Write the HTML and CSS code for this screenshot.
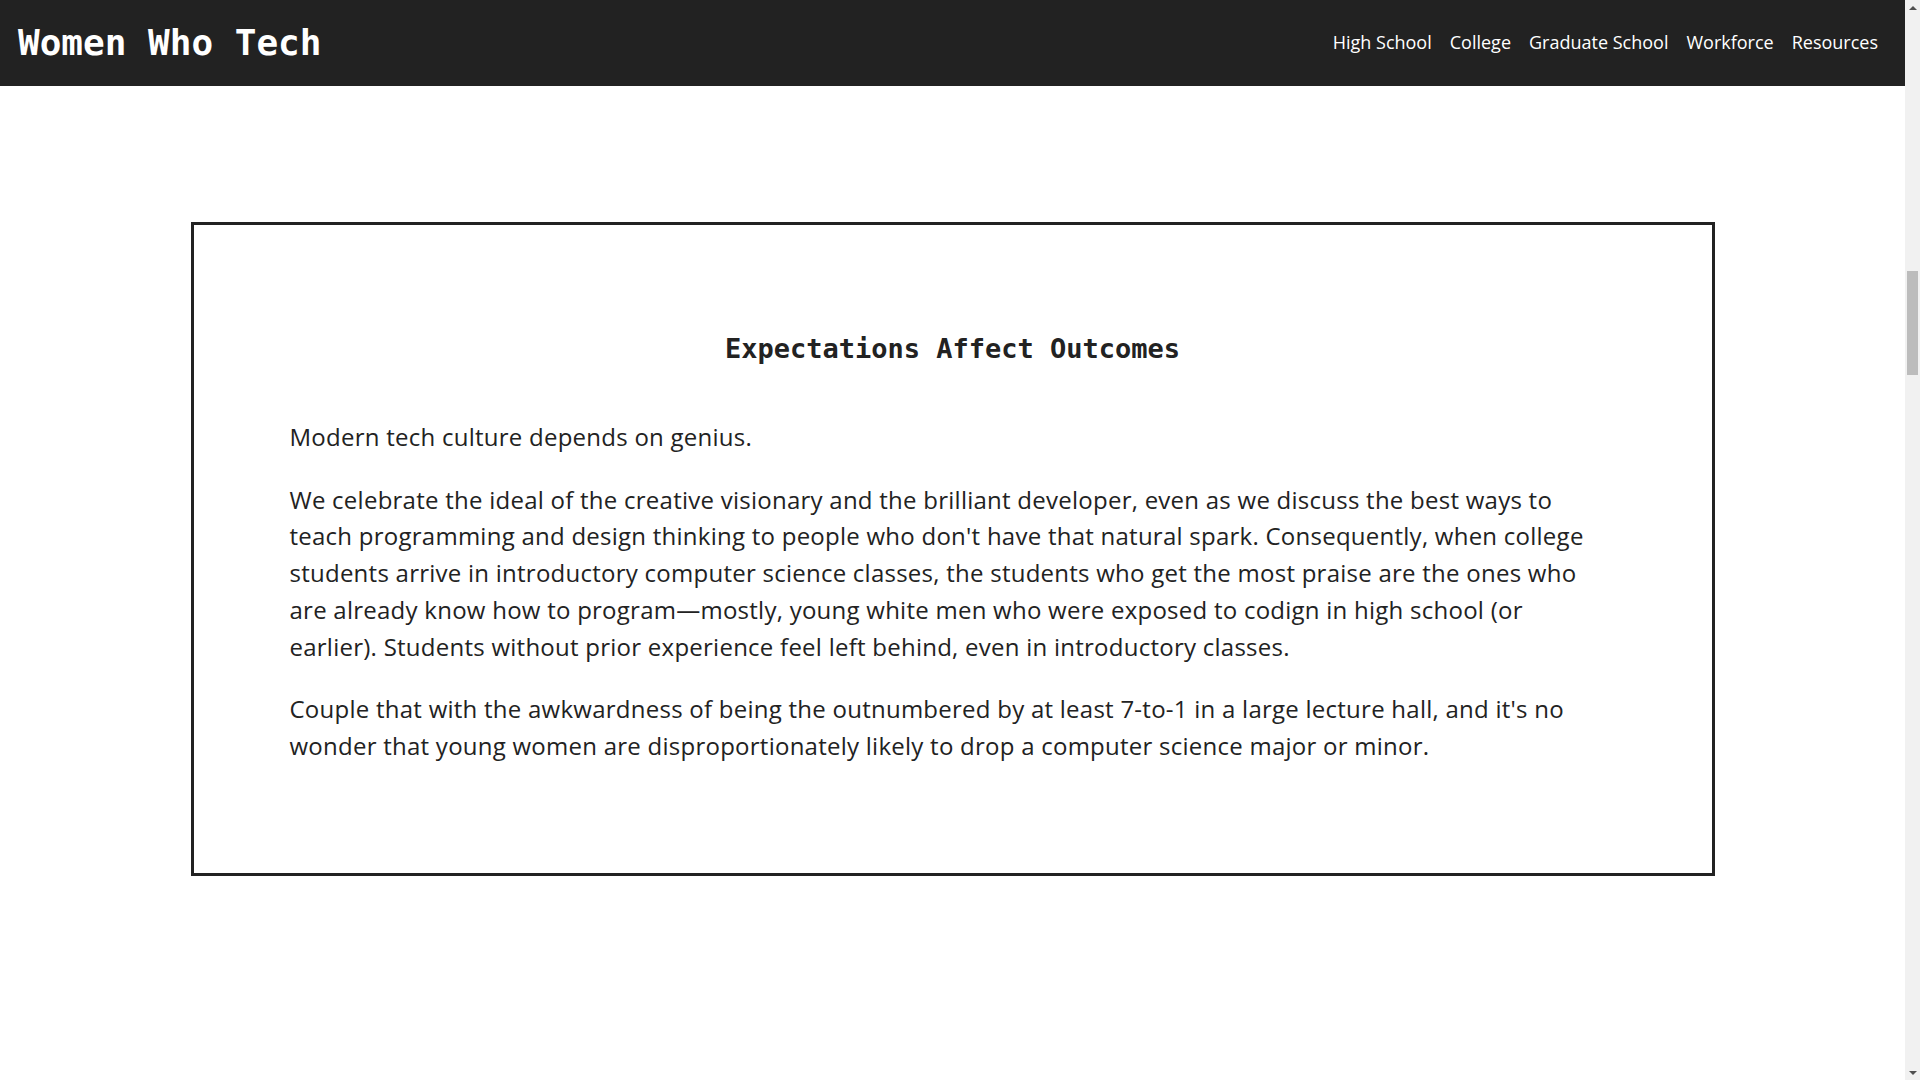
FILE: index.html
```html
<!DOCTYPE html>
<html lang="en">
<head>
<meta charset="utf-8">
<title>Women Who Tech</title>
<link rel="stylesheet" href="styles.css">
</head>
<body>
<div class="page">
  <header class="site-header">
    <h1 class="brand">Women Who Tech</h1>
    <nav class="nav">
      <a href="#" class="nav-link">High School</a>
      <a href="#" class="nav-link">College</a>
      <a href="#" class="nav-link">Graduate School</a>
      <a href="#" class="nav-link">Workforce</a>
      <a href="#" class="nav-link">Resources</a>
    </nav>
  </header>
  <main class="main">
    <article class="panel">
      <h2 class="panel-title">Expectations Affect Outcomes</h2>
      <p class="panel-text">Modern tech culture depends on genius.</p>
      <p class="panel-text">We celebrate the ideal of the creative visionary and the brilliant developer, even as we discuss the best ways to teach programming and design thinking to people who don't have that natural spark. Consequently, when college students arrive in introductory computer science classes, the students who get the most praise are the ones who are already know how to program&mdash;mostly, young white men who were exposed to codign in high school (or earlier). Students without prior experience feel left behind, even in introductory classes.</p>
      <p class="panel-text">Couple that with the awkwardness of being the outnumbered by at least 7-to-1 in a large lecture hall, and it's no wonder that young women are disproportionately likely to drop a computer science major or minor.</p>
    </article>
  </main>
</div>
<div class="scrollbar" aria-hidden="true">
  <span class="scroll-arrow scroll-arrow-up"></span>
  <span class="scroll-thumb"></span>
  <span class="scroll-arrow scroll-arrow-down"></span>
</div>
</body>
</html>
```
FILE: styles.css
```css
body {
  margin: 0;
  height: 100vh;
  overflow: hidden;
  display: flex;
  background: #ffffff;
  color: #222222;
  font-family: "Open Sans", "Noto Sans", sans-serif;
}
.page {
  flex: 1;
  display: flex;
  flex-direction: column;
  min-width: 0;
}
.site-header {
  height: 86px;
  flex-shrink: 0;
  background: #222222;
  display: flex;
  align-items: center;
  justify-content: space-between;
  padding: 0 27px 0 18px;
}
.brand {
  margin: 0;
  font-family: "DejaVu Sans Mono", "Liberation Mono", monospace;
  font-weight: bold;
  font-size: 36px;
  line-height: 86px;
  color: #ffffff;
}
.nav {
  display: flex;
  gap: 18px;
}
.nav-link {
  color: #ffffff;
  text-decoration: none;
  font-size: 18px;
  line-height: 24px;
  padding-bottom: 2px;
}
.main {
  padding-top: 136px;
}
.panel {
  width: 80%;
  margin: 0 auto;
  box-sizing: border-box;
  border: 3px solid #222222;
  padding: 109px 96px 108px;
}
.panel-title {
  margin: 0 0 55px;
  text-align: center;
  font-family: "DejaVu Sans Mono", "Liberation Mono", monospace;
  font-weight: bold;
  font-size: 27px;
  line-height: 30px;
  color: #222222;
}
.panel-text {
  margin: 0 0 26px;
  font-size: 24px;
  letter-spacing: 0.25px;
  line-height: 36.7px;
}
.panel-text:last-child {
  margin-bottom: 0;
}
.scrollbar {
  width: 15px;
  flex-shrink: 0;
  background: #f1f1f1;
  display: flex;
  flex-direction: column;
  align-items: center;
}
.scroll-arrow {
  width: 15px;
  height: 15px;
  flex-shrink: 0;
  display: flex;
  align-items: center;
  justify-content: center;
}
.scroll-arrow::before {
  content: "";
  width: 0;
  height: 0;
  border-left: 4px solid transparent;
  border-right: 4px solid transparent;
}
.scroll-arrow-up::before {
  border-bottom: 4px solid #505050;
}
.scroll-arrow-down {
  margin-top: auto;
}
.scroll-arrow-down::before {
  border-top: 4px solid #505050;
}
.scroll-thumb {
  width: 11px;
  height: 104px;
  margin-top: 256px;
  background: #bcbcbc;
}
```
